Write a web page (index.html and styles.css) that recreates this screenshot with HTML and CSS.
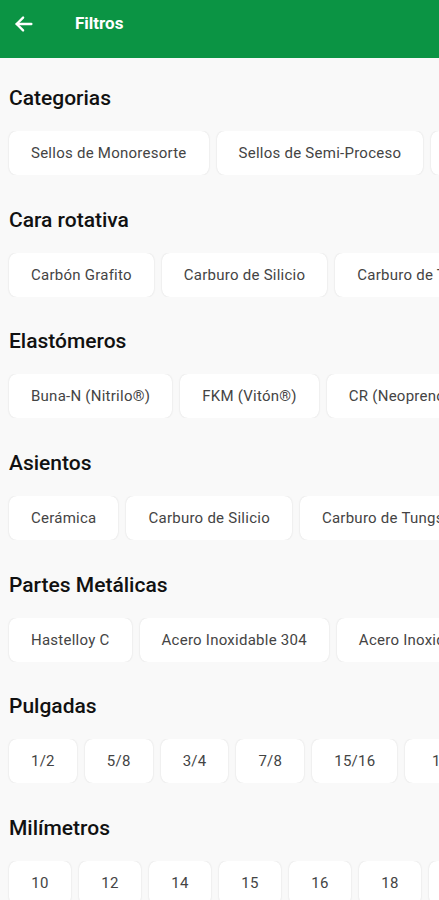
FILE: index.html
```html
<!DOCTYPE html>
<html lang="es">
<head>
    <meta charset="UTF-8">
    <meta name="viewport" content="width=device-width, initial-scale=1.0">
    <title>Filtros</title>
    <link rel="stylesheet" href="styles.css">
</head>
<body>
    <header class="topbar">
        <button class="back-btn" aria-label="Volver">
            <svg width="22" height="22" viewBox="0 0 24 24" fill="none" stroke="#fff" stroke-width="2.6" stroke-linecap="round" stroke-linejoin="round">
                <path d="M20 12H4"/>
                <path d="M11 5l-7 7 7 7"/>
            </svg>
        </button>
        <h1 class="topbar-title">Filtros</h1>
    </header>

    <main class="filters">
        <section class="filter-group">
            <h2>Categorias</h2>
            <div class="chips">
                <span class="chip">Sellos de Monoresorte</span>
                <span class="chip">Sellos de Semi-Proceso</span>
                <span class="chip">Sellos de Proceso</span>
            </div>
        </section>

        <section class="filter-group">
            <h2>Cara rotativa</h2>
            <div class="chips">
                <span class="chip">Carbón Grafito</span>
                <span class="chip">Carburo de Silicio</span>
                <span class="chip">Carburo de Tungsteno</span>
            </div>
        </section>

        <section class="filter-group">
            <h2>Elastómeros</h2>
            <div class="chips">
                <span class="chip">Buna-N (Nitrilo®)</span>
                <span class="chip">FKM (Vitón®)</span>
                <span class="chip">CR (Neopreno®)</span>
            </div>
        </section>

        <section class="filter-group">
            <h2>Asientos</h2>
            <div class="chips">
                <span class="chip">Cerámica</span>
                <span class="chip">Carburo de Silicio</span>
                <span class="chip">Carburo de Tungsteno</span>
            </div>
        </section>

        <section class="filter-group">
            <h2>Partes Metálicas</h2>
            <div class="chips">
                <span class="chip">Hastelloy C</span>
                <span class="chip">Acero Inoxidable 304</span>
                <span class="chip">Acero Inoxidable 316</span>
            </div>
        </section>

        <section class="filter-group">
            <h2>Pulgadas</h2>
            <div class="chips">
                <span class="chip chip-num">1/2</span>
                <span class="chip chip-num">5/8</span>
                <span class="chip chip-num">3/4</span>
                <span class="chip chip-num">7/8</span>
                <span class="chip chip-num">15/16</span>
                <span class="chip chip-num">1</span>
            </div>
        </section>

        <section class="filter-group">
            <h2>Milímetros</h2>
            <div class="chips">
                <span class="chip chip-num">10</span>
                <span class="chip chip-num">12</span>
                <span class="chip chip-num">14</span>
                <span class="chip chip-num">15</span>
                <span class="chip chip-num">16</span>
                <span class="chip chip-num">18</span>
                <span class="chip chip-num">20</span>
            </div>
        </section>
    </main>
</body>
</html>
```

FILE: styles.css
```css
body {
    font-family: Roboto, "Noto Sans", sans-serif;
    margin: 0;
    background-color: #f9f9f9;
    color: #111;
    overflow: hidden;
}
.topbar {
    height: 58px;
    background-color: #0b9444;
    display: flex;
    align-items: center;
    padding: 0 12px;
    box-sizing: border-box;
}
.back-btn {
    background: none;
    border: none;
    padding: 0;
    width: 24px;
    height: 24px;
    display: flex;
    align-items: center;
    justify-content: center;
    margin-top: -10px;
}
.topbar-title {
    margin: -12px 0 0 39px;
    font-size: 17px;
    font-weight: 700;
    color: #fff;
}
.filters {
    padding-top: 25px;
}
.filter-group {
    margin-bottom: 29.7px;
}
.filter-group h2 {
    margin: 0 0 18px;
    padding-left: 9px;
    font-size: 21px;
    font-weight: 500;
    line-height: 30px;
    color: #111;
}
.chips {
    display: flex;
    gap: 8px;
    padding-left: 9px;
    white-space: nowrap;
    overflow: hidden;
}
.chip {
    flex: none;
    height: 44px;
    display: flex;
    align-items: center;
    justify-content: center;
    padding: 0 22px;
    background: #fff;
    border-radius: 8px;
    box-shadow: 0 0 2px rgba(0, 0, 0, 0.14);
    font-size: 15px;
    letter-spacing: 0.25px;
    color: #444;
    box-sizing: border-box;
}
.chip-num {
    min-width: 62px;
}
```
